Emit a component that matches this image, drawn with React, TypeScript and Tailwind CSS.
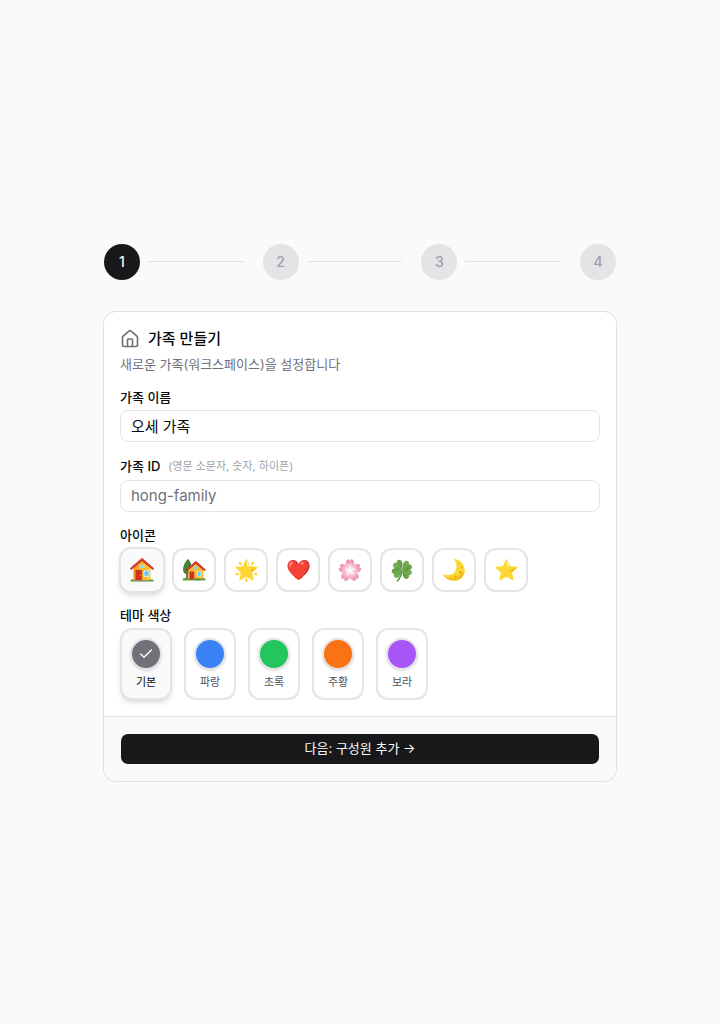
import { useState, type ReactNode } from "react";
import { Check, House } from "lucide-react";

const STEPS = [1, 2, 3, 4];

const THEMES = [
  { id: "default", label: "기본", swatch: "bg-[#71717a]" },
  { id: "blue", label: "파랑", swatch: "bg-[#3b82f6]" },
  { id: "green", label: "초록", swatch: "bg-[#22c55e]" },
  { id: "orange", label: "주황", swatch: "bg-[#f97316]" },
  { id: "purple", label: "보라", swatch: "bg-[#a855f7]" },
];

function HouseArt() {
  return (
    <svg viewBox="0 0 24 24" className="size-6" aria-hidden="true">
      <defs>
        <linearGradient id="house-wall" x1="0" y1="0" x2="1" y2="0">
          <stop offset="0" stopColor="#f29a1f" />
          <stop offset="1" stopColor="#ffca28" />
        </linearGradient>
      </defs>
      <path d="M3.500 9.500 12 2l8.500 7.500v12.500h-17z" fill="url(#house-wall)" />
      <path d="M0.500 22.200c1.500-1.500 3.500-.8 4.500-.2h14.500c1-1 3-1.200 4 .2v1.300h-23z" fill="#689f38" />
      <path d="M4 22h15l-1 1.200h-13z" fill="#a1887f" />
      <path d="M5.500 12.500h6v9.500h-6z" fill="#d32f2f" />
      <path d="M5.500 12.500h6v9.500" fill="none" stroke="#a52714" strokeWidth=".6" />
      <circle cx="10.300" cy="17.500" r=".6" fill="#ffca28" />
      <path d="M14 12.500h5v6h-5z" fill="#81d4fa" stroke="#f5f5f5" strokeWidth=".7" />
      <path d="M16.500 12.500v6M14 15.500h5" stroke="#4fa5d8" strokeWidth=".5" />
      <path d="M9.800 7h4.400v3h-4.400z" fill="#81d4fa" stroke="#fff3c4" strokeWidth=".5" />
      <path d="M1.300 10.500 12 1.300l10.700 9.200" fill="none" stroke="#b71c1c" strokeWidth="2.200" strokeLinecap="round" strokeLinejoin="round" />
      <path d="M1.500 9.900 12 .9l10.500 9" fill="none" stroke="#ef5350" strokeWidth="1.100" strokeLinecap="round" strokeLinejoin="round" />
    </svg>
  );
}

function GardenHouseArt() {
  return (
    <svg viewBox="0 0 24 24" className="size-6" aria-hidden="true">
      <path d="M4.200 13h1.800v8h-1.800z" fill="#795548" />
      <path d="M6 1C4 2.500 1.200 7 1 11.500c0 3.200 1.800 4.700 4.300 4.700 3 0 4.500-2 4.400-5C9.600 6.500 7.500 2.500 6 1z" fill="#43863b" />
      <path d="M6 1c1.500 1.500 3.600 5.500 3.700 10.200 0 1.900-.6 3.400-1.800 4.200C8.500 10 7.800 5 6 1z" fill="#2e6b31" />
      <path d="M6.300 10.500 13.800 4l7.500 6.500v10.500h-15z" fill="#fbb829" />
      <path d="M.8 20.800c2-1.600 4-1 5.200-.3h14.500c1-.8 2.200-.6 3 .5v1.500h-22.700z" fill="#689f38" />
      <path d="M7.500 13.500h4.700v7.700h-4.700z" fill="#d32f2f" />
      <path d="M15 13.500h4.300v4.800h-4.300z" fill="#81d4fa" stroke="#f5f5f5" strokeWidth=".6" />
      <path d="M17.200 13.500v4.800" stroke="#4fa5d8" strokeWidth=".5" />
      <path d="M12 8.700h3.600v2.600h-3.600z" fill="#81d4fa" />
      <path d="M5 11.800 13.800 4.200l8.700 7.600" fill="none" stroke="#b71c1c" strokeWidth="2" strokeLinecap="round" strokeLinejoin="round" />
      <path d="M5.200 11.200 13.800 3.800l8.500 7.400" fill="none" stroke="#ef5350" strokeWidth="1" strokeLinecap="round" strokeLinejoin="round" />
      <path d="M12.500 22c.5-1.300 2-1.500 2.800-.8 1-1 2.800-.6 3.200.8z" fill="#43863b" />
    </svg>
  );
}

const PETAL_ANGLES = [0, 72, 144, 216, 288];

function BlossomArt() {
  return (
    <svg viewBox="0 0 24 24" className="size-6" aria-hidden="true">
      <defs>
        <radialGradient id="petal" gradientUnits="userSpaceOnUse" cx="12" cy="12.500" r="11">
          <stop offset="0" stopColor="#ffffff" />
          <stop offset=".35" stopColor="#fbdbe7" />
          <stop offset="1" stopColor="#ec7fa7" />
        </radialGradient>
      </defs>
      {PETAL_ANGLES.map((angle) => (
        <path
          key={angle}
          d="M12 12.500C9.500 10 7.300 6.500 8 4.200 8.400 2.700 9.500 1.500 10.500 1.300L12 3.200l1.500-1.900c1 .2 2.100 1.400 2.500 2.900.7 2.300-1.500 5.800-4 8.300z"
          fill="url(#petal)"
          stroke="#e991b0"
          strokeWidth=".3"
          transform={`rotate(${angle} 12 12.500)`}
        />
      ))}
      {PETAL_ANGLES.map((angle) => (
        <path
          key={angle}
          d="M12 12.500v-4.500M12 12.500l-1-3.500M12 12.500l1-3.500"
          stroke="#fff"
          strokeWidth=".6"
          strokeLinecap="round"
          transform={`rotate(${angle} 12 12.500)`}
        />
      ))}
    </svg>
  );
}

function CloverArt() {
  return (
    <svg viewBox="0 0 24 24" className="size-6" aria-hidden="true">
      <defs>
        <linearGradient id="leaf" x1="0" y1="0" x2="1" y2="1">
          <stop offset="0" stopColor="#82b65a" />
          <stop offset="1" stopColor="#4f8f35" />
        </linearGradient>
      </defs>
      <path d="M11.800 11.500c.2 4-1 7.500-4.300 11.300" fill="none" stroke="#5d983f" strokeWidth="1.600" strokeLinecap="round" />
      {[-38, 52, 128, 242].map((angle) => (
        <path
          key={angle}
          d="M12 11.800C10.500 9.500 6.800 7.500 7 4.200 7.100 1.700 10.500.7 12 3c1.500-2.300 4.900-1.300 5 1.200.2 3.300-3.500 5.300-5 7.600z"
          fill="url(#leaf)"
          transform={`rotate(${angle} 12 11.800)`}
        />
      ))}
      <path d="M12 11.800 8 7.500M12 11.800l4.500-4M12 11.800l-5 2.500M12 11.800l4.500 4" stroke="#a4cc82" strokeWidth=".5" strokeLinecap="round" />
    </svg>
  );
}

function MoonArt() {
  return (
    <svg viewBox="0 0 24 24" className="size-6" aria-hidden="true">
      <path
        d="M12.800 1c5.500.8 9.900 5.200 9.900 11 0 6.200-4.700 10.700-10.600 10.700-4.800 0-9-2.500-11-6.200.5-.5 1-.3 1.500 0 3 1.300 7.500.5 10-2.600 2.700-3.400 2.400-8.600-.2-11.900-.4-.5-.3-1 .4-1z"
        fill="#fdd835"
      />
      <path d="M22.700 12c0 6.200-4.700 10.700-10.600 10.700-4.800 0-9-2.500-11-6.200 4 4 10 4.800 14.800 2.200 3.500-2 6-4.500 6.800-6.700z" fill="#f3c022" />
      <g fill="#e6a70f">
        <ellipse cx="18.500" cy="14.500" rx="1.500" ry="1.300" />
        <ellipse cx="13.500" cy="18.500" rx="1.400" ry="1" />
        <circle cx="19.500" cy="9.500" r=".9" />
        <circle cx="17.800" cy="18.500" r=".8" />
        <circle cx="9" cy="19.500" r=".7" />
        <circle cx="16.500" cy="6" r=".7" />
      </g>
    </svg>
  );
}

const ICONS: { id: string; label: string; art: ReactNode }[] = [
  { id: "house", label: "집", art: <HouseArt /> },
  { id: "garden", label: "정원이 있는 집", art: <GardenHouseArt /> },
  { id: "glow", label: "빛나는 별", art: "🌟" },
  { id: "heart", label: "하트", art: "❤️" },
  { id: "blossom", label: "벚꽃", art: <BlossomArt /> },
  { id: "clover", label: "네잎클로버", art: <CloverArt /> },
  { id: "moon", label: "달", art: <MoonArt /> },
  { id: "star", label: "별", art: "⭐" },
];

function Stepper({ current }: { current: number }) {
  return (
    <ol className="flex items-center">
      {STEPS.map((step, i) => (
        <li
          key={step}
          className={i < STEPS.length - 1 ? "flex flex-1 items-center" : "flex items-center"}
        >
          <span
            className={`flex size-9 shrink-0 items-center justify-center rounded-full text-sm font-medium ${
              step === current ? "bg-[#18181b] text-[#fafafa]" : "bg-[#e4e4e7] text-[#9f9fa9]"
            }`}
          >
            {step}
          </span>
          {i < STEPS.length - 1 && <span className="mr-[19px] ml-2 h-px flex-1 bg-[#e4e4e7]" />}
        </li>
      ))}
    </ol>
  );
}

export default function App() {
  const [step] = useState(1);
  const [name, setName] = useState("오세 가족");
  const [slug, setSlug] = useState("");
  const [icon, setIcon] = useState("house");
  const [theme, setTheme] = useState("default");

  return (
    <main className="flex min-h-screen items-center justify-center bg-[#fafafa] p-4 font-['Inter','Noto_Sans_CJK_KR',sans-serif] text-[#09090b] antialiased">
      <div className="w-full max-w-lg">
        <Stepper current={step} />

        <form
          className="mt-8 overflow-hidden rounded-xl bg-white ring-1 ring-[#e1e1e2]"
          onSubmit={(e) => e.preventDefault()}
        >
          <div className="flex flex-col gap-4 p-4">
            <header className="flex flex-col gap-1">
              <h1 className="flex items-center gap-2 text-[15px] leading-[22px] font-medium">
                <House className="size-5 shrink-0 text-[#71717b]" />
                가족 만들기
              </h1>
              <p className="text-[13px] leading-5 text-[#71717b]">
                새로운 가족(워크스페이스)을 설정합니다
              </p>
            </header>

            <div className="flex flex-col gap-1.5">
              <label htmlFor="family-name" className="text-[13px] leading-[14px] font-medium">
                가족 이름
              </label>
              <input
                id="family-name"
                value={name}
                onChange={(e) => setName(e.target.value)}
                className="h-8 w-full rounded-lg border border-[#e4e4e7] bg-transparent px-2.5 text-[15px] outline-none"
              />
            </div>

            <div className="flex flex-col gap-1.5">
              <label
                htmlFor="family-id"
                className="flex items-center gap-2 text-[13px] leading-4 font-medium"
              >
                가족 ID
                <span className="text-[11px] font-normal text-[#9f9fa9]">
                  (영문 소문자, 숫자, 하이픈)
                </span>
              </label>
              <input
                id="family-id"
                value={slug}
                onChange={(e) => setSlug(e.target.value)}
                placeholder="hong-family"
                className="h-8 w-full rounded-lg border border-[#e4e4e7] bg-transparent px-2.5 text-[15px] outline-none placeholder:text-[#71717b]"
              />
            </div>

            <div className="flex flex-col gap-1.5" role="group" aria-labelledby="icon-label">
              <span id="icon-label" className="text-[13px] leading-[14px] font-medium">
                아이콘
              </span>
              <div className="flex flex-wrap gap-2">
                {ICONS.map(({ id, label, art }) => (
                  <button
                    key={id}
                    type="button"
                    aria-label={label}
                    aria-pressed={icon === id}
                    onClick={() => setIcon(id)}
                    className={`flex items-center justify-center rounded-xl border-2 border-[#e4e4e7] text-xl ${
                      icon === id ? "-m-px size-[46px] bg-[#fafafa] shadow-md" : "size-11 bg-white"
                    }`}
                  >
                    {art}
                  </button>
                ))}
              </div>
            </div>

            <div className="flex flex-col gap-1.5" role="group" aria-labelledby="theme-label">
              <span id="theme-label" className="text-[13px] leading-[14px] font-medium">
                테마 색상
              </span>
              <div className="flex flex-wrap gap-3">
                {THEMES.map(({ id, label, swatch }) => (
                  <button
                    key={id}
                    type="button"
                    aria-pressed={theme === id}
                    onClick={() => setTheme(id)}
                    className={`flex flex-col items-center gap-1 rounded-xl border-2 border-[#e4e4e7] p-2 ${
                      theme === id ? "bg-[#fafafa] shadow-md" : "bg-white"
                    }`}
                  >
                    <span
                      className={`flex size-8 items-center justify-center rounded-full border-2 border-[#e4e4e7] shadow-sm ${swatch}`}
                    >
                      {theme === id && <Check className="size-4 text-white" />}
                    </span>
                    <span
                      className={`text-[11px] leading-4 ${
                        theme === id ? "text-[#09090b]" : "text-[#52525c]"
                      }`}
                    >
                      {label}
                    </span>
                  </button>
                ))}
              </div>
            </div>
          </div>

          <footer className="border-t border-[#e4e4e7] bg-[#f9f9f9] p-4">
            <button
              type="submit"
              className="flex h-8 w-full items-center justify-center rounded-lg border border-transparent bg-[#18181b] bg-clip-padding text-[13px] text-[#fafafa]"
            >
              다음: 구성원 추가 →
            </button>
          </footer>
        </form>
      </div>
    </main>
  );
}
